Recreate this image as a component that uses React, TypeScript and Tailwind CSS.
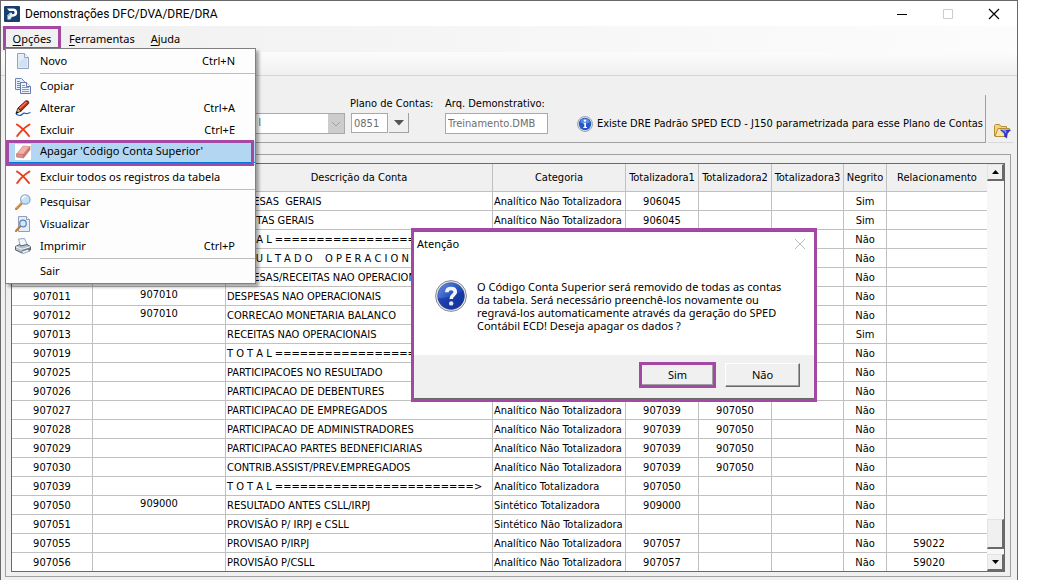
import { useState } from 'react';
import type { ReactNode } from 'react';

interface Row {
  conta?: string;
  superior?: string;
  descricao: string;
  categoria?: string;
  total1?: string;
  total2?: string;
  total3?: string;
  negrito: string;
  relacionamento?: string;
}

interface MenuEntry {
  label: string;
  shortcut?: string;
  icon?: ReactNode;
  active?: boolean;
  separator?: boolean;
}

const ANT = 'Analítico Não Totalizadora';
const AT = 'Analítico Totalizadora';

const ROWS: Row[] = [
  { descricao: 'DESPESAS  GERAIS', categoria: ANT, total1: '906045', negrito: 'Sim' },
  { descricao: 'RECEITAS GERAIS', categoria: ANT, total1: '906045', negrito: 'Sim' },
  { descricao: 'T O T A L ========================>', negrito: 'Não' },
  { descricao: 'R E S U L T A D O    O P E R A C I O N A L', negrito: 'Não' },
  { descricao: 'DESPESAS/RECEITAS NAO OPERACIONAIS', negrito: 'Não' },
  { conta: '907011', superior: '907010', descricao: 'DESPESAS NAO OPERACIONAIS', negrito: 'Não' },
  { conta: '907012', superior: '907010', descricao: 'CORRECAO MONETARIA BALANCO', negrito: 'Não' },
  { conta: '907013', descricao: 'RECEITAS NAO OPERACIONAIS', negrito: 'Sim' },
  { conta: '907019', descricao: 'T O T A L ========================>', negrito: 'Não' },
  { conta: '907025', descricao: 'PARTICIPACOES NO RESULTADO', negrito: 'Não' },
  { conta: '907026', descricao: 'PARTICIPACAO DE DEBENTURES', negrito: 'Não' },
  { conta: '907027', descricao: 'PARTICIPACAO DE EMPREGADOS', categoria: ANT, total1: '907039', total2: '907050', negrito: 'Não' },
  { conta: '907028', descricao: 'PARTICIPACAO DE ADMINISTRADORES', categoria: ANT, total1: '907039', total2: '907050', negrito: 'Não' },
  { conta: '907029', descricao: 'PARTICIPACAO PARTES BEDNEFICIARIAS', categoria: ANT, total1: '907039', total2: '907050', negrito: 'Não' },
  { conta: '907030', descricao: 'CONTRIB.ASSIST/PREV.EMPREGADOS', categoria: ANT, total1: '907039', total2: '907050', negrito: 'Não' },
  { conta: '907039', descricao: 'T O T A L ========================>', categoria: AT, total1: '907050', negrito: 'Não' },
  { conta: '907050', superior: '909000', descricao: 'RESULTADO ANTES CSLL/IRPJ', categoria: 'Sintético Totalizadora', total1: '909000', negrito: 'Não' },
  { conta: '907051', descricao: 'PROVISÃO P/ IRPJ e CSLL', categoria: 'Sintético Não Totalizadora', negrito: 'Não' },
  { conta: '907055', descricao: 'PROVISAO P/IRPJ', categoria: ANT, total1: '907057', negrito: 'Não', relacionamento: '59022' },
  { conta: '907056', descricao: 'PROVISÃO P/CSLL', categoria: ANT, total1: '907057', negrito: 'Não', relacionamento: '59020' },
];

const HEADERS = [
  'Descrição da Conta',
  'Categoria',
  'Totalizadora1',
  'Totalizadora2',
  'Totalizadora3',
  'Negrito',
  'Relacionamento',
];

function LogoIcon() {
  return (
    <svg width="16" height="16" viewBox="0 0 16 16" aria-hidden="true">
      <rect width="16" height="16" rx="1" fill="#17406f" />
      <path d="M3 2.500H9C11.600 2.500 13.200 4.100 13.200 6.600S11.600 10.700 9 10.700H8V8.200H9C10.100 8.200 10.600 7.500 10.600 6.600S10.100 5 9 5H5.200Z" fill="#fff" />
      <path d="M3.500 9.200L6 6.700H8V10.700L6.300 13.500H3.500Z" fill="#dcebf7" />
      <path d="M3.500 9.200L6 6.700V8.500L4.600 10.200Z" fill="#7fb2dc" />
    </svg>
  );
}

function NewIcon() {
  return (
    <svg width="16" height="16" viewBox="0 0 16 16" aria-hidden="true">
      <path d="M2.500.5H9.500L13.500 4.500V15.500H2.500Z" fill="#e3edf8" stroke="#93a3bd" />
      <path d="M4 9L12 3V14H4Z" fill="#d1e1f3" />
      <path d="M9.500.5V4.500H13.500" fill="#f8fbff" stroke="#93a3bd" />
    </svg>
  );
}

function CopyIcon() {
  return (
    <svg width="16" height="16" viewBox="0 0 16 16" aria-hidden="true">
      <path d="M.5.5H6.500L9.500 3.500V11.500H.5Z" fill="#e6effb" stroke="#6f86b8" />
      <path d="M2 3.500H5M2 5.500H7M2 7.500H7M2 9.500H7" stroke="#6f86b8" />
      <path d="M5.500 4.500H11.500L15.500 8.500V15.500H5.500Z" fill="#edf4fd" stroke="#6278ae" />
      <path d="M11.500 4.500V8.500H15.500" fill="#fff" stroke="#6278ae" />
      <path d="M7 7.500H10M7 9.500H14M7 11.500H14M7 13.500H14" stroke="#7e9acb" />
    </svg>
  );
}

function EditIcon() {
  return (
    <svg width="16" height="16" viewBox="0 0 16 16" aria-hidden="true">
      <path d="M1 14.200L4.500 15.500C7.500 15.500 7 13 9.500 13.200C11.500 13.400 11 14.500 15.500 12.500" fill="none" stroke="#1d5fb0" strokeWidth="1.200" />
      <path d="M3 8L10.500 1C12.500 0 14.500 1.500 13.600 3.600L6 11.200Z" fill="#c02a14" stroke="#3a120c" strokeWidth=".8" />
      <path d="M4.500 8.500L11.500 2" stroke="#f0795b" strokeWidth="1.500" />
      <path d="M3 8L6 11.200L1 13.500Z" fill="#e7b56c" stroke="#2b1608" strokeWidth=".8" />
      <path d="M.5 14L1.800 11.300L3.500 12.800Z" fill="#111" />
    </svg>
  );
}

function DeleteIcon() {
  return (
    <svg width="16" height="16" viewBox="0 0 16 16" aria-hidden="true">
      <path d="M2 2.500C6 5 10.500 9.500 14 14M14.500 2.500C9.500 5.500 5 10 2.200 14" fill="none" stroke="#e8401c" strokeWidth="2" strokeLinecap="round" />
    </svg>
  );
}

function EraserIcon() {
  return (
    <svg width="16" height="16" viewBox="0 0 16 16" aria-hidden="true">
      <rect width="16" height="16" fill="#fff" />
      <path d="M8 2L15 2.500L8.500 10.500L1.500 10Z" fill="#f3b0aa" stroke="#c9837e" strokeWidth=".6" />
      <path d="M1.500 10L8.500 10.500V14L1.500 13Z" fill="#e08b85" stroke="#b66f69" strokeWidth=".6" />
      <path d="M8.500 10.500L15 2.500V5.800L8.500 14Z" fill="#cf7670" stroke="#b66f69" strokeWidth=".6" />
    </svg>
  );
}

function SearchIcon() {
  return (
    <svg width="16" height="16" viewBox="0 0 16 16" aria-hidden="true">
      <path d="M1.200 14.800L6.500 9.500" stroke="#c7792c" strokeWidth="2.600" strokeLinecap="round" />
      <path d="M1.200 14.200L6 9.400" stroke="#f1b869" strokeLinecap="round" />
      <circle cx="10.300" cy="5.500" r="4.700" fill="#bfe2f8" stroke="#8caac6" strokeWidth="1.300" />
      <path d="M7 5.500C7.200 3.500 8.800 2.200 10.800 2.200" fill="none" stroke="#fff" strokeWidth="1.500" />
    </svg>
  );
}

function PreviewIcon() {
  return (
    <svg width="16" height="16" viewBox="0 0 16 16" aria-hidden="true">
      <path d="M3.500.5H11.500L14.500 3.500V15.500H3.500Z" fill="#e4eefa" stroke="#8d9fc0" />
      <path d="M11.500.5V3.500H14.500" fill="#fff" stroke="#8d9fc0" />
      <path d="M1 15L5.500 10" stroke="#c7792c" strokeWidth="2.200" strokeLinecap="round" />
      <circle cx="8" cy="7.500" r="3.300" fill="#cde8fa" stroke="#647fae" strokeWidth="1.200" />
    </svg>
  );
}

function PrintIcon() {
  return (
    <svg width="16" height="16" viewBox="0 0 16 16" aria-hidden="true">
      <path d="M3.500 1L9.500.5L12.500 7L5.500 8.500Z" fill="#eef6ff" stroke="#7790b0" strokeWidth=".8" />
      <path d="M.5 8.500L4.500 6.500L5.500 8L12 6.500L15.500 8.500V12L7 15L.5 12Z" fill="#b9bfc8" stroke="#4c535e" strokeWidth=".9" />
      <path d="M1 8.800L7 11.300L15.300 8.700" fill="none" stroke="#f5f7fa" />
      <path d="M7 12L15 9.500V12L7 15Z" fill="#6d7580" />
      <path d="M6 13.500L12.500 11.500L15 13L8.500 15.500Z" fill="#e8f3ff" stroke="#69788d" strokeWidth=".6" />
    </svg>
  );
}

function InfoIcon() {
  return (
    <svg width="16" height="16" viewBox="0 0 16 16" aria-hidden="true">
      <circle cx="8" cy="8" r="7.500" fill="#dfe4ec" stroke="#8c939d" strokeWidth=".8" />
      <circle cx="8" cy="8" r="6.200" fill="#2659c4" />
      <path d="M3 6C4 3.500 6 2.500 8 2.500S12 3.500 13 6C10 8 6 8 3 6Z" fill="#5d8be0" />
      <circle cx="8" cy="4.600" r="1.200" fill="#fff" />
      <path d="M6.500 6.800H9V11H10V12H6.300V11H7.300V7.800H6.500Z" fill="#fff" />
    </svg>
  );
}

function QuestionIcon() {
  return (
    <svg width="32" height="32" viewBox="0 0 32 32" aria-hidden="true">
      <defs>
        <linearGradient id="question-fill" x1="0" y1="0" x2="1" y2="1">
          <stop offset="0" stopColor="#6f93e0" />
          <stop offset=".5" stopColor="#2450bd" />
          <stop offset="1" stopColor="#142f92" />
        </linearGradient>
      </defs>
      <circle cx="16" cy="16" r="15.400" fill="#e6e8ec" stroke="#858a92" />
      <circle cx="16" cy="16" r="13.400" fill="url(#question-fill)" stroke="#3c5793" strokeWidth=".6" />
      <path d="M3 18C10 19 21 15 28.500 10.500C32 23 24 29.500 16 29.300C9 29 3.500 24 3 18Z" fill="#12309c" opacity=".55" />
      <path d="M11.800 12.200C11.900 9.600 13.500 8.500 16 8.500C18.600 8.500 20.300 9.800 20.300 12C20.300 15 16.200 15 16.200 19" fill="none" stroke="#f2f4f8" strokeWidth="3.600" />
      <circle cx="16.200" cy="23.400" r="2.200" fill="#e4e8f0" />
    </svg>
  );
}

function FolderFilterIcon() {
  return (
    <svg width="17" height="16" viewBox="0 0 17 16" aria-hidden="true">
      <path d="M.5 13V2.500L1.500 1.500H5.500L7 3.500H12.500V5.500" fill="#f3d47e" stroke="#b98d33" />
      <path d="M1 13.500L4 5.500H15.500L12.500 13.500Z" fill="#fbe7a5" stroke="#b98d33" />
      <path d="M6.500 7H16.500L12.800 10.800V15L10.500 13.500V10.800Z" fill="#2b35e0" stroke="#1419a0" strokeWidth=".5" />
      <path d="M8.500 7.800H12L11.500 10" fill="none" stroke="#9fb0ff" />
    </svg>
  );
}

const MENU: MenuEntry[] = [
  { label: 'Novo', shortcut: 'Ctrl+N', icon: <NewIcon />, separator: true },
  { label: 'Copiar', icon: <CopyIcon /> },
  { label: 'Alterar', shortcut: 'Ctrl+A', icon: <EditIcon /> },
  { label: 'Excluir', shortcut: 'Ctrl+E', icon: <DeleteIcon /> },
  { label: "Apagar 'Código Conta Superior'", icon: <EraserIcon />, active: true, separator: true },
  { label: 'Excluir todos os registros da tabela', icon: <DeleteIcon />, separator: true },
  { label: 'Pesquisar', icon: <SearchIcon /> },
  { label: 'Visualizar', icon: <PreviewIcon /> },
  { label: 'Imprimir', shortcut: 'Ctrl+P', icon: <PrintIcon />, separator: true },
  { label: 'Sair' },
];

function TitleBar() {
  return (
    <header className="flex h-[25px] items-center bg-white pl-[3px] pr-[17px]">
      <LogoIcon />
      <h1 className="ml-[5px] flex-1 font-['Roboto',sans-serif] text-xs">Demonstrações DFC/DVA/DRE/DRA</h1>
      <div className="flex items-center gap-[34px]">
        <button type="button" aria-label="Minimizar">
          <svg width="12" height="12" viewBox="0 0 12 12"><path d="M1 6.500H11" stroke="#000" /></svg>
        </button>
        <button type="button" aria-label="Maximizar" disabled>
          <svg width="12" height="12" viewBox="0 0 12 12"><path d="M1.500 1.500H10.500V10.500H1.500Z" fill="none" stroke="#ccc" /></svg>
        </button>
        <button type="button" aria-label="Fechar">
          <svg width="12" height="12" viewBox="0 0 12 12"><path d="M1 1L11 11M11 1L1 11" stroke="#000" strokeWidth="1.200" /></svg>
        </button>
      </div>
    </header>
  );
}

function OptionsMenu() {
  return (
    <div role="menu" className="absolute left-0.5 top-[22px] z-20 w-[251px] border border-[#808080] bg-[#fdfdfd] py-px shadow-[3px_3px_3px_rgba(0,0,0,0.35)]">
      {MENU.map((item) => (
        <div key={item.label}>
          <button
            type="button"
            role="menuitem"
            className={
              item.active
                ? 'relative flex h-[22px] w-full items-center border-b border-[#0078d7] bg-[#b3d7f3] pl-[9px] pr-5 text-left'
                : 'flex h-[22px] w-full items-center pl-[9px] pr-5 text-left'
            }
          >
            <span className="w-[25px]">{item.icon}</span>
            <span className="flex-1 whitespace-nowrap">{item.label}</span>
            <span>{item.shortcut}</span>
            {item.active && <span className="absolute -bottom-1 -top-px left-0 right-px z-10 border-3 border-[#a349a4]" />}
          </button>
          {item.separator && <div className="my-px ml-[34px] h-px bg-[#bdbdbd]" />}
        </div>
      ))}
    </div>
  );
}

function MenuBar() {
  return (
    <nav className="flex h-[26px] items-start bg-linear-to-r from-[#f0f0f0] to-[#fcfcfc] pl-0.5">
      <div className="relative">
        <button type="button" className="h-6 w-[58px] border-3 border-[#a349a4] pt-px leading-[17px]">
          <span className="underline underline-offset-2">O</span>pções
        </button>
        <OptionsMenu />
      </div>
      <button type="button" className="h-6 px-2 pt-0.5">
        <span className="underline underline-offset-2">F</span>erramentas
      </button>
      <button type="button" className="h-6 px-2 pt-0.5">
        <span className="underline underline-offset-2">A</span>juda
      </button>
    </nav>
  );
}

function Filters() {
  return (
    <div className="-mr-[3px] flex items-end">
      <form className="flex h-12 min-w-0 flex-1 items-start border-b border-r border-[#a0a0a0] pl-[63px]">
        <div className="flex w-[277px] shrink-0 flex-col">
          <label htmlFor="empresa" className="invisible h-[18px]">Empresa:</label>
          <div className="flex h-[21px] border border-[#a9a9a9] bg-white text-[#6d6d6d]">
            <select id="empresa" disabled className="min-w-0 flex-1 appearance-none pl-[82px] opacity-100">
              <option>COMERCIAL MODELO I</option>
            </select>
            <span className="flex w-4 items-center justify-center bg-[#ccc]">
              <svg width="10" height="6" viewBox="0 0 10 6"><path d="M1 1L5 5L9 1" fill="none" stroke="#a0a0a0" /></svg>
            </span>
          </div>
        </div>
        <div className="ml-[5px] w-[95px] shrink-0">
          <label htmlFor="plano" className="block h-[18px] whitespace-nowrap leading-[18px]">Plano de Contas:</label>
          <div className="flex gap-px pl-px">
            <input id="plano" defaultValue="0851" readOnly className="h-5 w-[37px] border border-[#a9a9a9] bg-white pl-0.5 text-[#6d6d6d]" />
            <button type="button" aria-label="Abrir planos de contas" className="flex h-5 w-5 items-center justify-center border-b border-r border-[#a0a0a0] bg-[#f0f0f0]">
              <svg width="10" height="6" viewBox="0 0 10 6"><path d="M0 0H10L5 5.500Z" fill="#555" /></svg>
            </button>
          </div>
        </div>
        <div className="w-[132px] shrink-0">
          <label htmlFor="arquivo" className="block h-[18px] leading-[18px]">Arq. Demonstrativo:</label>
          <input id="arquivo" defaultValue="Treinamento.DMB" readOnly className="h-[21px] w-[103px] border border-[#a9a9a9] bg-white pl-0.5 text-[#6d6d6d]" />
        </div>
        <p className="flex items-center gap-1 whitespace-nowrap pt-[21px]">
          <InfoIcon />
          Existe DRE Padrão SPED ECD - J150 parametrizada para esse Plano de Contas
        </p>
      </form>
      <button type="button" aria-label="Filtrar arquivos" className="ml-0.5 flex h-6 w-[26px] justify-end border-b border-[#d9d9d9] pr-[3px] pt-1">
        <FolderFilterIcon />
      </button>
    </div>
  );
}

function ScrollBar() {
  const raised = 'border-b-2 border-l border-r-2 border-t border-b-[#696969] border-l-[#e3e3e3] border-r-[#696969] border-t-[#e3e3e3] bg-[#f0f0f0]';
  return (
    <div className="flex w-[17px] flex-col bg-[#f7f7f7]">
      <button type="button" aria-label="Rolar para cima" className={`${raised} flex h-[17px] items-center justify-center`}>
        <svg width="7" height="4" viewBox="0 0 7 4"><path d="M0 4L3.500 0L7 4Z" /></svg>
      </button>
      <div className="flex-1" />
      <div className={`${raised} mb-[5px] h-[30px]`} />
      <button type="button" aria-label="Rolar para baixo" className={`${raised} flex h-[17px] items-center justify-center`}>
        <svg width="7" height="4" viewBox="0 0 7 4"><path d="M0 0H7L3.500 4Z" /></svg>
      </button>
    </div>
  );
}

function AccountsTable() {
  const centered = 'border-b border-r border-[#c0c0c0] p-0 pt-0.5 text-center';
  const left = 'overflow-hidden border-b border-r border-[#c0c0c0] p-0 pl-px pt-0.5 text-left';
  return (
    <div className="flex border border-[#696969] bg-white">
      <table className="min-w-0 flex-1 table-fixed border-separate border-spacing-0 whitespace-pre leading-4">
        <colgroup>
          <col className="w-[81px]" />
          <col className="w-[133px]" />
          <col />
          <col className="w-[133px]" />
          <col className="w-[73px]" />
          <col className="w-[73px]" />
          <col className="w-[72px]" />
          <col className="w-[43px]" />
          <col className="w-[100px]" />
        </colgroup>
        <thead>
          <tr className="h-7 bg-[#f0f0f0]">
            <th scope="col" aria-label="Conta" className="border-b border-r border-[#c0c0c0] p-0" />
            <th scope="col" aria-label="Código Conta Superior" className="border-b border-r border-[#c0c0c0] p-0" />
            {HEADERS.map((title) => (
              <th key={title} scope="col" className="border-b border-r border-[#c0c0c0] p-0 font-normal last:border-r-0">
                {title}
              </th>
            ))}
          </tr>
        </thead>
        <tbody>
          {ROWS.map((row, index) => (
            <tr key={index} className="h-[19px] last:h-[18px] last:*:border-b-0">
              <td className={centered}>{row.conta}</td>
              <td className="border-b border-r border-[#c0c0c0] p-0 text-center align-top">{row.superior}</td>
              <td className={left}>{row.descricao}</td>
              <td className={left}>{row.categoria}</td>
              <td className={centered}>{row.total1}</td>
              <td className={centered}>{row.total2}</td>
              <td className={centered}>{row.total3}</td>
              <td className={centered}>{row.negrito}</td>
              <td className="border-b border-[#c0c0c0] p-0 pr-4 pt-0.5 text-center">{row.relacionamento}</td>
            </tr>
          ))}
        </tbody>
      </table>
      <ScrollBar />
    </div>
  );
}

function ConfirmDialog({ onClose }: { onClose: () => void }) {
  return (
    <div
      role="dialog"
      aria-labelledby="dialog-title"
      className="absolute left-[411px] top-[228px] z-30 w-[406px] border-3 border-[#a349a4] bg-white font-['Noto_Sans',sans-serif]"
    >
      <div className="border-b border-t border-[#696969]">
        <div className="flex items-center justify-between pb-1 pl-[3px] pr-2 pt-1">
          <h2 id="dialog-title" className="leading-4">Atenção</h2>
          <button type="button" aria-label="Fechar" onClick={onClose}>
            <svg width="12" height="12" viewBox="0 0 12 12"><path d="M1 1L11 11M11 1L1 11" stroke="#bbb" /></svg>
          </button>
        </div>
        <div className="flex gap-2.5 px-[21px] pb-[23px] pt-6">
          <div className="shrink-0"><QuestionIcon /></div>
          <p className="w-[310px] leading-[13px]">
            O Código Conta Superior será removido de todas as contas da tabela. Será necessário preenchê-los
            novamente ou regravá-los automaticamente através da geração do SPED Contábil ECD! Deseja apagar os
            dados ?
          </p>
        </div>
        <div className="flex h-[43px] items-start justify-end gap-[9px] bg-[#f0f0f0] pr-3.5 pt-[7px]">
          <button type="button" onClick={onClose} className="h-[26px] w-[77px] border-3 border-[#a349a4] bg-[#f0f0f0] shadow-[inset_-1px_-1px_0_#a0a0a0]">
            Sim
          </button>
          <button type="button" onClick={onClose} className="mt-px h-6 w-[75px] border border-b-[#696969] border-l-white border-r-[#696969] border-t-white bg-[#f0f0f0] shadow-[inset_-1px_-1px_0_#a0a0a0]">
            Não
          </button>
        </div>
      </div>
    </div>
  );
}

export default function App() {
  const [dialogOpen, setDialogOpen] = useState(true);

  return (
    <div className="min-h-screen bg-white pr-[26px] text-[11px] text-black">
      <div className="relative min-h-screen border-x border-t border-[#696969] bg-[#f0f0f0]">
        <div className="font-['Noto_Sans',sans-serif]">
          <TitleBar />
          <MenuBar />
        </div>
        <div className="h-6 border-b border-[#d5d5d5] bg-linear-to-b from-[#fcfcfc] to-[#f0f0f0]" />
        <main className="pb-[3px] pl-1 pr-1.5 pt-[19px] font-['DejaVu_Sans_Condensed','DejaVu_Sans',sans-serif]">
          <Filters />
          <section className="mt-[11px] border border-[#a0a0a0] px-[5px] pb-1 pt-2">
            <AccountsTable />
          </section>
        </main>
      </div>
      {dialogOpen && <ConfirmDialog onClose={() => setDialogOpen(false)} />}
    </div>
  );
}
